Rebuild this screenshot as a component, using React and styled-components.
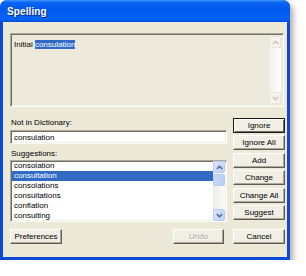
import React from 'react';
import styled, { createGlobalStyle } from 'styled-components';

const GlobalStyle = createGlobalStyle`
  html, body {
    margin: 0;
    padding: 0;
    background: #ffffff;
  }
  body {
    font-family: "Liberation Sans", Arial, sans-serif;
    font-size: 8px;
  }
`;

// Outer window frame with the XP blue border and drop shadow
const Frame = styled.div`
  width: 290px;
  height: 260px;
  box-sizing: border-box;
  border-radius: 7px 7px 0 0;
  background: #0a4bd6;
  padding: 0 3px 3px;
  display: flex;
  flex-direction: column;
  box-shadow: 3px 4px 6px rgba(0, 0, 0, 0.35);
`;

const TitleBar = styled.div`
  height: 23px;
  margin: 0 -3px;
  border-radius: 7px 7px 0 0;
  background: linear-gradient(
    to bottom,
    #3d95ff 0%,
    #0a63f0 12%,
    #0058ee 40%,
    #0564f7 85%,
    #035bf0 94%,
    #0043d8 100%
  );
  display: flex;
  align-items: center;
  padding-left: 7px;
  box-sizing: border-box;
`;

const Title = styled.span`
  color: #ffffff;
  font-weight: bold;
  font-size: 10px;
  text-shadow: 1px 1px 0 #0a2a8a;
  letter-spacing: 0.1px;
`;

const Content = styled.div`
  flex: 1;
  background: #ece9d8;
  padding: 11px 2px 13px 7px;
  display: flex;
  flex-direction: column;
`;

const Sunken = styled.div`
  box-sizing: border-box;
  border: 1px solid;
  border-color: #aca899 #ffffff #ffffff #aca899;
  box-shadow: inset 1px 1px 0 #716f64, inset -1px -1px 0 #f1efe2;
`;

const Preview = styled(Sunken)`
  height: 74px;
  margin-right: 1px;
  background: #edeadc;
  display: flex;
  padding: 2px;
`;

const PreviewText = styled.div`
  flex: 1;
  padding: 4px 0 0 1px;
  line-height: 10px;
  color: #000;
`;

const Selected = styled.span`
  background: #316ac5;
  color: #ffffff;
`;

const ScrollBar = styled.div`
  width: 12px;
  display: flex;
  flex-direction: column;
  justify-content: space-between;
  background: ${({ disabled }) =>
    disabled
      ? 'linear-gradient(to right, #f3f1ea, #fefefe)'
      : 'linear-gradient(to right, #eeede5, #fbfbf8)'};
`;

const ScrollButton = styled.div`
  height: 12px;
  box-sizing: border-box;
  border-radius: 2px;
  display: flex;
  align-items: center;
  justify-content: center;
  border: 1px solid ${({ disabled }) => (disabled ? '#e8e6dc' : '#b8cbf4')};
  background: ${({ disabled }) =>
    disabled ? '#f4f3ee' : 'linear-gradient(to bottom right, #dce6fd, #bdd0fa)'};
`;

const Thumb = styled.div`
  height: 12px;
  margin-top: 1px;
  box-sizing: border-box;
  border-radius: 2px;
  border: 1px solid #b8cbf4;
  background: linear-gradient(to right, #c9d8fc, #b9cdf9);
`;

const Track = styled.div`
  flex: 1;
  display: flex;
  flex-direction: column;
`;

const Chevron = ({ up, color }) => (
  <svg width="7" height="5" viewBox="0 0 7 5">
    <path
      d={up ? 'M0.8 4 L3.5 1.3 L6.2 4' : 'M0.8 1 L3.5 3.7 L6.2 1'}
      fill="none"
      stroke={color}
      strokeWidth="1.4"
    />
  </svg>
);

const Lower = styled.div`
  margin-top: 11px;
  display: flex;
  gap: 6px;
`;

const LeftColumn = styled.div`
  width: 217px;
  display: flex;
  flex-direction: column;
`;

const Label = styled.div`
  line-height: 10px;
  height: 10px;
  margin-top: ${({ top }) => top || 0}px;
  padding-left: 1px;
  color: #000;
`;

const Field = styled(Sunken)`
  height: 14px;
  margin-top: 2px;
  background: #ffffff;
  padding: 2px 0 0 3px;
  line-height: 10px;
`;

const List = styled(Sunken)`
  height: 62px;
  margin-top: 1px;
  background: #ffffff;
  display: flex;
  padding: 0 1px;
  overflow: hidden;
`;

const Rows = styled.div`
  flex: 1;
  overflow: hidden;
`;

const Row = styled.div`
  height: 10px;
  line-height: 10px;
  padding-left: 2px;
  background: ${({ selected }) => (selected ? '#316ac5' : 'transparent')};
  color: ${({ selected }) => (selected ? '#ffffff' : '#000000')};
`;

const ButtonColumn = styled.div`
  width: 52px;
  display: flex;
  flex-direction: column;
  gap: 2.4px;
`;

const Button = styled.div`
  height: 15px;
  width: ${({ w }) => w || 52}px;
  box-sizing: border-box;
  display: flex;
  align-items: center;
  justify-content: center;
  background: #f0eee5;
  border: 1px solid;
  border-color: ${({ primary }) =>
    primary ? '#1a1a1a' : '#ffffff #5e5c52 #5e5c52 #ffffff'};
  box-shadow: ${({ primary }) =>
    primary
      ? 'inset 1px 1px 0 #ffffff, inset -1px -1px 0 #716f64'
      : 'inset -1px -1px 0 #aca899'};
  color: ${({ disabled }) => (disabled ? '#aca899' : '#000000')};
  text-shadow: ${({ disabled }) => (disabled ? '1px 1px 0 #ffffff' : 'none')};
`;

const BottomRow = styled.div`
  margin-top: 7px;
  display: flex;
  align-items: center;
`;

const Spacer = styled.div`
  flex: 1;
`;

const UndoSlot = styled.div`
  margin-right: 9px;
`;

const suggestions = [
  'consolation',
  'consultation',
  'consolations',
  'consultations',
  'conflation',
  'consulting',
];

const actions = ['Ignore', 'Ignore All', 'Add', 'Change', 'Change All', 'Suggest'];

export default function App() {
  return (
    <>
      <GlobalStyle />
      <Frame>
        <TitleBar>
          <Title>Spelling</Title>
        </TitleBar>
        <Content>
          <Preview>
            <PreviewText>
              Initial <Selected>consulation</Selected>
            </PreviewText>
            <ScrollBar disabled>
              <ScrollButton disabled>
                <Chevron up color="#c9c7ba" />
              </ScrollButton>
              <ScrollButton disabled>
                <Chevron color="#c9c7ba" />
              </ScrollButton>
            </ScrollBar>
          </Preview>

          <Lower>
            <LeftColumn>
              <Label>Not in Dictionary:</Label>
              <Field>consulation</Field>
              <Label top={5}>Suggestions:</Label>
              <List>
                <Rows>
                  {suggestions.map((word, i) => (
                    <Row key={word} selected={i === 1}>
                      {word}
                    </Row>
                  ))}
                </Rows>
                <ScrollBar>
                  <Track>
                    <ScrollButton>
                      <Chevron up color="#4d6185" />
                    </ScrollButton>
                    <Thumb />
                  </Track>
                  <ScrollButton>
                    <Chevron color="#4d6185" />
                  </ScrollButton>
                </ScrollBar>
              </List>
            </LeftColumn>
            <ButtonColumn>
              {actions.map((label, i) => (
                <Button key={label} primary={i === 0}>
                  {label}
                </Button>
              ))}
            </ButtonColumn>
          </Lower>

          <BottomRow>
            <Button w={52}>Preferences</Button>
            <Spacer />
            <UndoSlot>
              <Button w={51} disabled>
                Undo
              </Button>
            </UndoSlot>
            <Button w={52}>Cancel</Button>
          </BottomRow>
        </Content>
      </Frame>
    </>
  );
}
